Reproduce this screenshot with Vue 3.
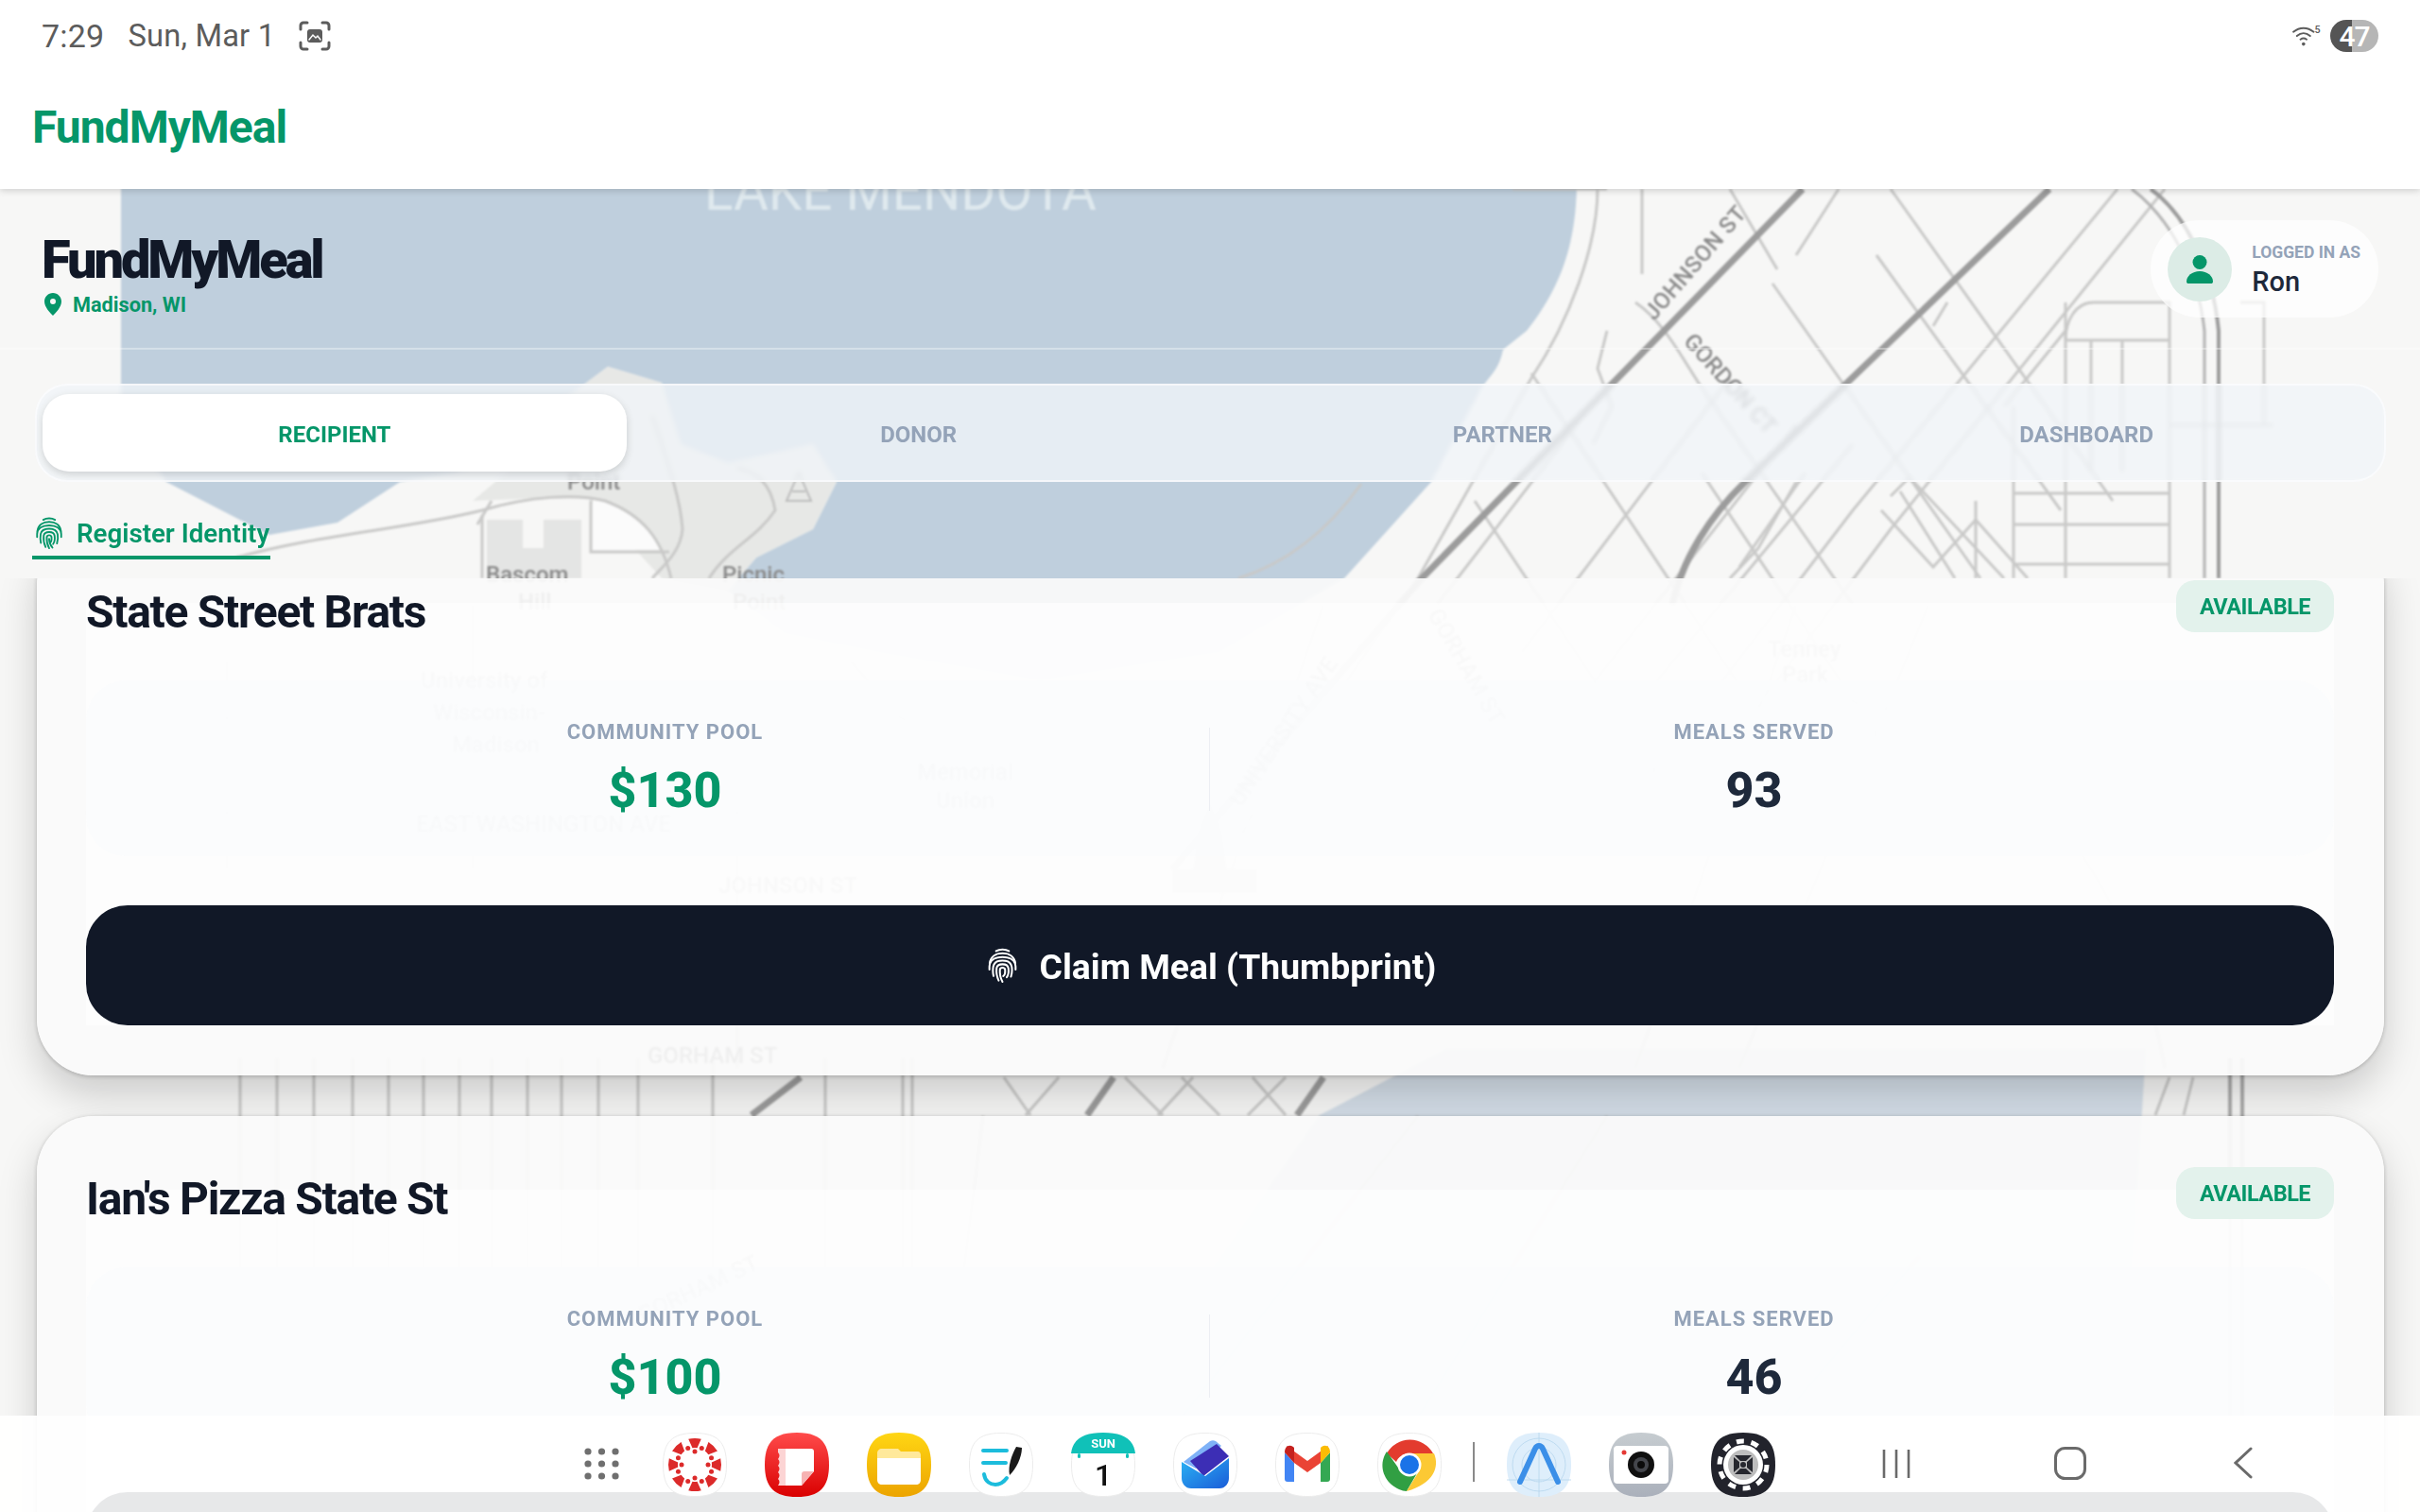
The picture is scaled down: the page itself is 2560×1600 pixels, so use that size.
<script setup>
const polar = (r, a) => {
  const t = (a * Math.PI) / 180
  return [(34 + r * Math.sin(t)).toFixed(2), (34 - r * Math.cos(t)).toFixed(2)]
}
const canvasPetals = [0, 45, 90, 135, 180, 225, 270, 315].map((c) => {
  const [a, b] = polar(28, c - 14)
  const [d, e] = polar(28, c + 14)
  const [f, g] = polar(18, c + 8)
  const [h, i] = polar(18, c - 8)
  return `M${a} ${b}A28 28 0 0 1 ${d} ${e}L${f} ${g}A18 18 0 0 0 ${h} ${i}Z`
})
const canvasDots = [22.5, 67.5, 112.5, 157.5, 202.5, 247.5, 292.5, 337.5, 0, 90, 180, 270].map((a, idx) => {
  const [x, y] = polar(idx < 8 ? 19 : 14, a)
  return { x, y, key: a }
})
const dots = []
for (const y of [4, 17, 30]) for (const x of [4, 18.5, 33]) dots.push({ x, y })

const thin = [
  'M2000 200L2235 530', 'M1985 270L2180 540', 'M1875 300L2095 612', 'M1830 200L1880 285',
  'M1945 200L1900 270', 'M2060 320L2045 345', 'M2290 200L2000 560L1850 760', 'M2240 200L1960 540L1700 880',
  'M1690 200C1690 260 1660 340 1620 400L1500 612L1300 900', 'M1730 320C1760 340 1780 380 1800 410L1960 640',
  'M1700 350L1690 390L1705 430L1685 470', 'M1620 395L1850 740', 'M1560 530L1780 860', 'M1690 420L1520 640',
  'M1830 400L1610 690', 'M1900 450L1680 730', 'M1960 470L1720 760', 'M1910 500L1840 600', 'M1800 500L2000 800',
  'M2145 612L2090 550L2045 600L1990 540', 'M2120 612L2020 505L2000 525', 'M2068 612L2010 520',
  'M2090 530L2090 612', 'M1830 612L1860 580L1900 510', 'M1310 612C1380 590 1420 540 1440 512',
  'M2185 360C2185 340 2195 320 2215 320L2295 320L2295 612', 'M2185 320L2185 612', 'M2212 360L2212 500', 'M2245 360L2245 500',
  'M2185 360L2295 360', 'M2120 430L2185 350', 'M2130 430L2130 612', 'M2130 522L2295 522', 'M2130 555L2295 555', 'M2130 597L2295 597',
  'M2295 450L2405 450', 'M2370 320L2395 320L2395 450', 'M1600 200L1700 200', 'M1737 200L1737 290',
  'M250 590C340 565 430 560 510 540C560 525 610 522 640 530C680 545 700 570 710 612', 'M625 530L625 584L708 584',
  'M510 545L510 612', 'M520 530L505 555', 'M690 440C710 500 720 530 722 560C720 585 700 600 690 612',
  'M750 612C770 580 800 570 820 540C815 510 800 500 780 495', 'M135 1000C300 1020 900 1010 1140 1020',
  'M91 860L1040 860', 'M130 760L1000 760', 'M240 700L240 920', 'M500 640L500 920', 'M780 780L780 1130',
  'M1400 640L1230 1130', 'M900 700L1080 900', 'M1900 640L1730 1130', 'M2040 640L1840 1130', 'M1920 740C2100 740 2250 900 2290 1130',
  'M2030 1330L1800 1600', 'M1700 1181L1500 1500', 'M1500 1181L1250 1500', 'M1040 1181L1000 1500',
  'M1250 1140L1290 1180', 'M1062 1140L1090 1180', 'M1120 1140L1085 1180', 'M1190 1140L1230 1180',
  'M1262 1140L1225 1180', 'M1325 1140L1360 1180', 'M1360 1140L1320 1180', 'M2295 1140L2280 1180', 'M2320 1140L2310 1180',
  'M254 1120V1500', 'M293 1120V1500', 'M332 1120V1500', 'M373 1120V1500', 'M411 1120V1500', 'M448 1120V1500', 'M486 1120V1500',
  'M520 1120V1500', 'M558 1120V1500', 'M594 1120V1500', 'M633 1120V1500', 'M675 1120V1500', 'M754 1120V1500', 'M873 1120V1500', 'M955 1120V1500', 'M965 1120V1500'
]
const major = [
  'M1907 200L1504 612L1240 920', 'M2168 200L1954 405L1846 510C1810 545 1780 590 1769 640',
  'M847 1140L795 1180', 'M1178 1140L1150 1180', 'M1400 1140L1372 1180'
]
</script>

<template>
  <div class="screen">
    <svg class="map" viewBox="0 0 2560 1600" xmlns="http://www.w3.org/2000/svg">
      <rect width="2560" height="1600" fill="#f7f7f6" />
      <path class="lake" d="M128 190H1668C1668 250 1655 300 1615 350L1590 370C1585 395 1572 400 1565 415L1514 510L1422 612L1290 690L1100 720L940 692L830 670L770 625L800 590L860 560L885 510L860 470L770 490L720 470L700 405L643 388L600 420L570 470L480 500L423 510L357 553L285 566L176 510L128 440Z" />
      <path fill="#e7e8e6" d="M560 480L600 420L643 388L700 405L720 470L770 490L860 470L885 510L860 560L800 590L770 625L700 612L620 525L500 530Z" />
      <path fill="#e4e5e4" d="M515 612V550H553V580H575V550H615V612Z" />
      <path fill="#fbfbfb" d="M627 528C660 530 690 560 698 582H627Z" />
      <path fill="#d4dee8" d="M1530 1110H2270L2240 1600H1100L1396 1180Z" />
      <g fill="none" stroke="#c9c9c8" stroke-width="3">
        <path v-for="d in thin" :key="d" :d="d" />
      </g>
      <g fill="none" stroke="#9c9c9c" stroke-width="7">
        <path v-for="d in major" :key="d" :d="d" />
        <path d="M2275 200C2310 225 2340 280 2347 350V612" stroke-width="4" />
        <path d="M2255 200C2295 230 2325 285 2332 350V612" stroke-width="3" stroke="#b4b4b4" />
        <path d="M2359 1120V1600M2372 1120V1600" stroke-width="4" stroke="#aaa" />
      </g>
      <path fill="none" stroke="#bdbdbd" stroke-width="2" d="M832 530L845 500L858 530ZM838 520H852" />
      <g class="labels">
        <text class="lake-label" x="745" y="222" textLength="415" lengthAdjust="spacingAndGlyphs">LAKE MENDOTA</text>
        <text x="1750" y="340" transform="rotate(-49 1750 340)" font-size="27" textLength="150">JOHNSON ST</text>
        <text x="1780" y="362" transform="rotate(48 1780 362)" font-size="24">GORDON CT</text>
        <text x="592" y="482" font-size="24">Picnic</text>
        <text x="600" y="518" font-size="26">Point</text>
        <text x="514" y="616" font-size="26">Bascom</text>
        <text x="764" y="616" font-size="26">Picnic</text>
      </g>
      <g class="labels under">
        <text x="548" y="645" font-size="26">Hill</text>
        <text x="775" y="645" font-size="26">Point</text>
        <text x="445" y="728" font-size="34">University of</text>
        <text x="458" y="762" font-size="34">Wisconsin-</text>
        <text x="478" y="796" font-size="34">Madison</text>
        <text x="970" y="825" font-size="30">Memorial</text>
        <text x="990" y="855" font-size="30">Union</text>
        <text x="440" y="880" font-size="26">EAST WASHINGTON AVE</text>
        <text x="760" y="945" font-size="26">JOHNSON ST</text>
        <text x="685" y="1125" font-size="26">GORHAM ST</text>
        <text x="1313" y="855" transform="rotate(-56 1313 855)" font-size="26">UNIVERSITY AVE</text>
        <text x="1510" y="650" transform="rotate(60 1510 650)" font-size="26">GORHAM ST</text>
        <text x="1870" y="695" font-size="28">Tenney</text>
        <text x="1885" y="722" font-size="28">Park</text>
        <text x="680" y="1400" transform="rotate(-25 680 1400)" font-size="26">GORHAM ST</text>
      </g>
      <path fill="#a8a8a8" d="M1240 945V920H1262L1268 880L1280 850L1292 880L1298 920H1330V945Z" />
    </svg>

    <header class="topbar">
      <div class="status">
        <span class="clock">7:29</span>
        <span class="date">Sun, Mar 1</span>
        <svg class="shot" viewBox="0 0 34 32" fill="none" stroke="#5c5c5c" stroke-width="3" stroke-linecap="round">
          <path d="M2 9V5a3 3 0 0 1 3-3h4M25 2h4a3 3 0 0 1 3 3v4M32 23v4a3 3 0 0 1-3 3h-4M9 30H5a3 3 0 0 1-3-3v-4" />
          <rect x="9" y="9" width="16" height="14" rx="3" fill="#5c5c5c" stroke="none" />
          <path d="M11 20l4-5 3 3 2-2 3 4" stroke="#fff" stroke-width="1.4" />
        </svg>
        <span class="status-fill"></span>
        <svg class="wifi" viewBox="0 0 28 22" fill="none" stroke="#5c5c5c" stroke-width="1.8" stroke-linecap="round">
          <path d="M1 7C7 2 15 2 21 7M4.500 11C8.500 7.500 13.500 7.500 17.500 11M8 14.500C10 13 12 13 14 14.500" />
          <circle cx="11" cy="19" r="1.700" fill="#5c5c5c" stroke="none" />
          <text x="22" y="8" class="wifi-five">5</text>
        </svg>
        <span class="battery"><span class="battery-text">47</span></span>
      </div>
      <div class="brand">FundMyMeal</div>
    </header>

    <section class="page-head">
      <div class="title-block">
        <h1 class="title">FundMyMeal</h1>
        <div class="place">
          <svg class="pin" viewBox="0 0 18 24">
            <path fill="#059669" fill-rule="evenodd" d="M9 0C4 0 0 4 0 9c0 6 6 12 9 15 3-3 9-9 9-15 0-5-4-9-9-9Zm0 6a3 3 0 1 1 0 6 3 3 0 0 1 0-6Z" />
          </svg>
          <span>Madison, WI</span>
        </div>
      </div>
      <div class="user-pill">
        <span class="avatar">
          <svg viewBox="0 0 28 30" class="person">
            <circle cx="14" cy="7.500" r="7.500" fill="#059669" />
            <path fill="#059669" d="M0 28C0 22 6 17 14 17S28 22 28 28C28 29.500 27 30 26 30H2C1 30 0 29.500 0 28Z" />
          </svg>
        </span>
        <span class="user-text">
          <span class="user-label">LOGGED IN AS</span>
          <span class="user-name">Ron</span>
        </span>
      </div>
    </section>

    <nav class="tabs">
      <div class="tab active">RECIPIENT</div>
      <div class="tab">DONOR</div>
      <div class="tab">PARTNER</div>
      <div class="tab">DASHBOARD</div>
    </nav>

    <div class="subnav">
      <div class="subtab">
        <svg class="fp" viewBox="0 0 24 28" fill="none" stroke="#059669" stroke-width="1.500" stroke-linecap="round">
          <path d="M7 2.500C9.800 .8 14.200 .8 17 2.500" />
          <path d="M2 12C2.600 7 6.600 4.200 12 4.200S21.400 7 22 12" />
          <path d="M1.800 17V14.500C2 9.800 6 7.200 12 7.200S22 9.800 22.200 14.500V17" />
          <path d="M5 22C4.400 19.500 4.400 17 4.800 14.500 5.400 11.500 8.400 10 12 10S18.600 11.500 19.200 14.800C19.600 17.500 19.400 20 18.600 22.500" />
          <path d="M9 25.500C7.600 22.500 7 19 7.400 15.800 7.800 13.500 9.600 12.800 12 12.800 14.400 12.800 16.300 13.800 16.600 16 17 19 16.400 21.500 15.300 23" />
          <path d="M12 26.500C10.400 23.500 9.800 19.500 10 17 10.200 15.800 11 15.500 12 15.500S13.800 16 14 17C14.200 19.500 13.600 21.400 12.600 22" />
          <path d="M12 18.500C12 21 12.800 23.500 14.800 26" />
        </svg>
        <span>Register Identity</span>
      </div>
    </div>

    <main class="feed">
      <div class="feed-inner">
        <article class="card">
          <div class="card-head">
            <h2 class="card-title">State Street Brats</h2>
            <span class="badge">AVAILABLE</span>
          </div>
          <div class="stats">
            <div class="stat">
              <div class="stat-label">COMMUNITY POOL</div>
              <div class="stat-value money">$130</div>
            </div>
            <div class="divider"></div>
            <div class="stat">
              <div class="stat-label">MEALS SERVED</div>
              <div class="stat-value">93</div>
            </div>
          </div>
          <button class="claim">
            <svg class="fp-btn" viewBox="0 0 24 28" fill="none" stroke="#fff" stroke-width="1.500" stroke-linecap="round">
              <path d="M7 2.500C9.800 .8 14.200 .8 17 2.500" />
              <path d="M2 12C2.600 7 6.600 4.200 12 4.200S21.400 7 22 12" />
              <path d="M1.800 17V14.500C2 9.800 6 7.200 12 7.200S22 9.800 22.200 14.500V17" />
              <path d="M5 22C4.400 19.500 4.400 17 4.800 14.500 5.400 11.500 8.400 10 12 10S18.600 11.500 19.200 14.800C19.600 17.500 19.400 20 18.600 22.500" />
              <path d="M9 25.500C7.600 22.500 7 19 7.400 15.800 7.800 13.500 9.600 12.800 12 12.800 14.400 12.800 16.300 13.800 16.600 16 17 19 16.400 21.500 15.300 23" />
              <path d="M12 26.500C10.400 23.500 9.800 19.500 10 17 10.200 15.800 11 15.500 12 15.500S13.800 16 14 17C14.200 19.500 13.600 21.400 12.600 22" />
            </svg>
            <span>Claim Meal (Thumbprint)</span>
          </button>
        </article>

        <article class="card">
          <div class="card-head">
            <h2 class="card-title">Ian's Pizza State St</h2>
            <span class="badge">AVAILABLE</span>
          </div>
          <div class="stats">
            <div class="stat">
              <div class="stat-label">COMMUNITY POOL</div>
              <div class="stat-value money">$100</div>
            </div>
            <div class="divider"></div>
            <div class="stat">
              <div class="stat-label">MEALS SERVED</div>
              <div class="stat-value">46</div>
            </div>
          </div>
          <div class="claim"></div>
        </article>
      </div>
    </main>

    <footer class="dock">
      <svg class="apps" viewBox="0 0 37 34" fill="#6f6f6f">
        <circle v-for="(d, i) in dots" :key="i" :cx="d.x" :cy="d.y" r="3.600" />
      </svg>

      <svg class="app" viewBox="0 0 68 68">
        <path class="sq-w" d="M34 .5C58 .5 67.500 10 67.500 34S58 67.500 34 67.500 .5 58 .5 34 10 .5 34 .5Z" />
        <path v-for="p in canvasPetals" :key="p" :d="p" fill="#dc2a2a" />
        <circle v-for="d in canvasDots" :key="d.key" :cx="d.x" :cy="d.y" r="2.500" fill="#dc2a2a" />
      </svg>

      <svg class="app" viewBox="0 0 68 68">
        <defs>
          <linearGradient id="red" x1="0" y1="0" x2="0" y2="1"><stop offset="0" stop-color="#ff4b4b" /><stop offset="1" stop-color="#d90000" /></linearGradient>
          <linearGradient id="yel" x1="0" y1="0" x2="0" y2="1"><stop offset="0" stop-color="#ffd614" /><stop offset="1" stop-color="#eca400" /></linearGradient>
          <linearGradient id="cam" x1="0" y1="0" x2="0" y2="1"><stop offset="0" stop-color="#c6ccd0" /><stop offset="1" stop-color="#aab0bb" /></linearGradient>
          <linearGradient id="blue" x1="0" y1="0" x2="1" y2="1"><stop offset="0" stop-color="#2bb4f4" /><stop offset="1" stop-color="#1a5cd8" /></linearGradient>
        </defs>
        <path fill="url(#red)" d="M34 0C58 0 68 10 68 34S58 68 34 68 0 58 0 34 10 0 34 0Z" />
        <path fill="#fff" d="M16 20c0-2 1-3 3-3h30c2 0 3 1 3 3v21L39 56H19c-2 0-3-1-3-3Z" />
        <path fill="#f6b2b2" d="M39 56V44c0-2 1-3 3-3h10Z" />
        <path fill="#fcd4d4" d="M14 17h8v39h-8c2-3 2-5 0-7 2-3 2-5 0-7 2-3 2-5 0-7 2-3 2-5 0-7 2-3 2-5 0-7Z" />
      </svg>

      <svg class="app" viewBox="0 0 68 68">
        <path fill="url(#yel)" d="M34 0C58 0 68 10 68 34S58 68 34 68 0 58 0 34 10 0 34 0Z" />
        <path fill="#ffe99b" d="M11 22c0-3 2-5 5-5h17l3 3h18c2 0 3 2 3 4v4H11Z" />
        <path fill="#fff" d="M11 27h46v23c0 3-2 5-5 5H16c-3 0-5-2-5-5Z" />
      </svg>

      <svg class="app" viewBox="0 0 68 68">
        <path class="sq-w" d="M34 .5C58 .5 67.500 10 67.500 34S58 67.500 34 67.500 .5 58 .5 34 10 .5 34 .5Z" />
        <path d="M15 19H40M15 32H39" stroke="#1cbcdc" stroke-width="4" stroke-linecap="round" fill="none" />
        <path d="M16 44C17 52 23 55 28 55 33 55 37 52 40 48" stroke="#1cbcdc" stroke-width="4" fill="none" stroke-linecap="round" />
        <path d="M50 15L56 16C56 26 50 38 43 45 41 36 45 24 50 15Z" fill="#1a1a1a" />
      </svg>

      <svg class="app" viewBox="0 0 68 68">
        <path class="sq-w" d="M34 .5C58 .5 67.500 10 67.500 34S58 67.500 34 67.500 .5 58 .5 34 10 .5 34 .5Z" />
        <path fill="#10c1b8" d="M0 22C2 6 14 0 34 0S66 6 68 22Z" />
        <rect x="7" y="22" width="3" height="5" rx="1.500" fill="#10c1b8" />
        <rect x="58" y="22" width="3" height="5" rx="1.500" fill="#10c1b8" />
        <text x="34" y="16" class="cal-day">SUN</text>
        <text x="34" y="56" class="cal-num">1</text>
      </svg>

      <svg class="app" viewBox="0 0 68 68">
        <path class="sq-w" d="M34 .5C58 .5 67.500 10 67.500 34S58 67.500 34 67.500 .5 58 .5 34 10 .5 34 .5Z" />
        <path fill="#7fb2f7" d="M11 31L39 9C41 8 43 8 45 9L51 14L24 38Z" />
        <path fill="#3c2eb5" d="M18 30L46 12L59 25L32 46Z" />
        <path fill="url(#blue)" d="M9 31L34 46L59 27V48C59 54 55 59 49 59H19C13 59 9 54 9 48Z" />
      </svg>

      <svg class="app" viewBox="0 0 68 68">
        <path class="sq-w" d="M34 .5C58 .5 67.500 10 67.500 34S58 67.500 34 67.500 .5 58 .5 34 10 .5 34 .5Z" />
        <path fill="#4285f4" d="M10 21v28c0 2 1 3 3 3h7V32Z" />
        <path fill="#34a853" d="M48 32v20h7c2 0 3-1 3-3V21Z" />
        <path fill="#ea4335" d="M20 32L34 42 48 32 56 14 34 30 12 14Z" />
        <path fill="#c5221f" d="M10 21c0-6 4-9 9-6l1 1V32Z" />
        <path fill="#fbbc04" d="M58 21c0-6-4-9-9-6l-1 1V32Z" />
      </svg>

      <svg class="app" viewBox="0 0 68 68">
        <path class="sq-w" d="M34 .5C58 .5 67.500 10 67.500 34S58 67.500 34 67.500 .5 58 .5 34 10 .5 34 .5Z" />
        <path fill="#e33b2e" d="M10 22A28 28 0 0 1 59 22H34C27 22 22 26 20 31L10 22Z" />
        <path fill="#319f43" d="M10 20C2 32 5 46 15 55 20 59 26 62 31 62L42 43C35 46 26 44 22 37Z" />
        <path fill="#fcc934" d="M34 22H60C66 36 60 54 31 62L44 41C49 34 44 24 34 22Z" />
        <circle cx="34" cy="34" r="12.500" fill="#fff" />
        <circle cx="34" cy="34" r="10" fill="#1a73e8" />
      </svg>

      <span class="dock-sep"></span>

      <svg class="app" viewBox="0 0 68 68">
        <path fill="#deeefb" d="M34 0C58 0 68 10 68 34S58 68 34 68 0 58 0 34 10 0 34 0Z" />
        <g fill="none" stroke="#b5d5ee" stroke-width=".8">
          <circle cx="34" cy="34" r="28" /><circle cx="34" cy="34" r="18" /><path d="M0 50H68M34 0V68" />
        </g>
        <path fill="none" stroke="#3b8fe8" stroke-width="6" stroke-linecap="round" stroke-linejoin="round" d="M14 52L30 17C32 13 36 13 38 17L54 52" />
      </svg>

      <svg class="app" viewBox="0 0 68 68">
        <path fill="url(#cam)" d="M34 0C58 0 68 10 68 34S58 68 34 68 0 58 0 34 10 0 34 0Z" />
        <rect x="5" y="14" width="58" height="40" rx="4" fill="#fff" />
        <circle cx="34" cy="34" r="14" fill="#101010" />
        <circle cx="34" cy="34" r="8" fill="#44464c" />
        <circle cx="34" cy="34" r="4" fill="#0b0b0b" />
        <circle cx="16" cy="21" r="2.500" fill="#e53935" />
      </svg>

      <svg class="app" viewBox="0 0 68 68">
        <path fill="#22232c" d="M34 0C58 0 68 10 68 34S58 68 34 68 0 58 0 34 10 0 34 0Z" />
        <circle cx="34" cy="34" r="21" fill="#fff" />
        <circle cx="34" cy="34" r="25" fill="none" stroke="#fff" stroke-width="5" stroke-dasharray="8 7.700" />
        <circle cx="34" cy="34" r="16" fill="#bdbdbd" />
        <g fill="#26272e">
          <path d="M25 24H43L37 30H31Z" /><path d="M25 44H43L37 38H31Z" /><path d="M24 26V42L30 37V31Z" /><path d="M44 26V42L38 37V31Z" />
          <circle cx="34" cy="34" r="3" />
        </g>
      </svg>

      <svg class="nav-recents" viewBox="0 0 30 32" stroke="#6a6a6a" stroke-width="2.600"><path d="M2 1V31M15 1V31M28 1V31" /></svg>
      <svg class="nav-home" viewBox="0 0 34 35" fill="none" stroke="#6a6a6a" stroke-width="3"><rect x="1.500" y="1.500" width="31" height="32" rx="10" /></svg>
      <svg class="nav-back" viewBox="0 0 20 34" fill="none" stroke="#6a6a6a" stroke-width="3" stroke-linecap="round"><path d="M18 2L2 17L18 32" /></svg>
    </footer>
  </div>
</template>

<style>
html, body { margin: 0; padding: 0; background: #f7f7f6; }
</style>

<style scoped>
.screen {
  position: relative;
  width: 2560px;
  height: 1600px;
  overflow: hidden;
  display: flex;
  flex-direction: column;
  font-family: Roboto, "Liberation Sans", sans-serif;
  color: #111827;
}
.map { position: absolute; inset: 0; width: 2560px; height: 1600px; filter: blur(1px); }
.lake { fill: #bfcfdd; }
.labels text { font-family: Roboto, sans-serif; fill: #8a8a8a; font-size: 24px; font-weight: 500; }
.labels.under text { fill: #444; }
.labels .lake-label { fill: #dfe9ee; font-size: 60px; font-weight: 400; }

.topbar { position: relative; height: 200px; flex: none; background: #fff; box-shadow: 0 2px 7px rgba(0, 0, 0, .16); }
.status { height: 76px; display: flex; align-items: center; padding: 0 44px; color: #5c5c5c; font-size: 34px; }
.clock { letter-spacing: .2px; }
.date { margin-left: 25px; font-size: 32.700px; letter-spacing: .2px; }
.shot { width: 34px; height: 32px; margin-left: 25px; }
.status-fill { flex: 1; }
.wifi { width: 30px; height: 24px; margin-right: 10px; }
.wifi-five { font-family: Roboto, sans-serif; font-size: 10px; font-weight: 500; fill: #5c5c5c; stroke: none; }
.battery {
  width: 51px; height: 34px; border-radius: 17px; display: flex; align-items: center; justify-content: center;
  background: linear-gradient(90deg, #555 0 45%, #b6b6b6 45% 100%);
}
.battery-text { color: #fff; font-size: 30px; font-weight: 500; letter-spacing: -1px; }
.brand { padding-left: 34px; height: 114px; line-height: 117px; font-size: 48px; font-weight: 700; letter-spacing: -1px; color: #059669; }

.page-head {
  position: relative; flex: none; height: 170px; box-sizing: border-box; padding: 33px 44px 0;
  display: flex; justify-content: space-between; align-items: flex-start;
  border-bottom: 2px solid rgba(255, 255, 255, .35);
}
.title { margin: 0; padding-top: 12px; font-size: 56px; line-height: 60px; font-weight: 900; letter-spacing: -3.100px; color: #111827; }
.place { display: flex; align-items: center; height: 30px; margin-top: 2px; color: #059669; font-size: 21.700px; font-weight: 700; }
.pin { width: 18px; height: 24px; margin: 0 12px 0 3px; }
.user-pill {
  display: flex; align-items: center; height: 103px; box-sizing: border-box; padding: 0 19px 0 18px; gap: 21px;
  border-radius: 52px; background: rgba(255, 255, 255, .72);
}
.avatar { width: 68px; height: 68px; border-radius: 50%; background: #dcece6; display: flex; align-items: center; justify-content: center; }
.person { width: 28px; height: 30px; }
.user-text { display: flex; flex-direction: column; padding-top: 2px; }
.user-label { font-size: 17.500px; line-height: 24px; font-weight: 700; color: #94a3b8; }
.user-name { font-size: 29px; line-height: 38px; font-weight: 500; color: #1e293b; }

.tabs {
  position: relative; flex: none; box-sizing: border-box; margin: 36px 36px 0 37px; height: 104px; padding: 9px 6px;
  display: grid; grid-template-columns: repeat(4, 1fr);
  border: 2px solid rgba(255, 255, 255, .6); border-radius: 34px;
  background: rgba(241, 245, 249, .78); backdrop-filter: blur(2px);
}
.tab { display: flex; align-items: center; justify-content: center; box-sizing: border-box; padding-top: 3px; border-radius: 28px; font-size: 24px; font-weight: 700; color: #94a3b8; }
.tab.active { background: #fff; color: #059669; box-shadow: 0 3px 8px rgba(0, 0, 0, .16); }

.subnav { position: relative; flex: none; height: 102px; padding-left: 34px; display: flex; align-items: flex-start; }
.subtab {
  height: 82px; box-sizing: border-box; padding-top: 35px; display: flex; align-items: flex-start; gap: 14px;
  border-bottom: 4px solid #059669; color: #059669; font-size: 27.700px; line-height: 40px; font-weight: 600; padding-right: 1px;
}
.fp { width: 30px; height: 35px; margin: 2px 0 0 3px; }

.feed { position: relative; flex: 1; min-height: 0; overflow: hidden; }
.feed-inner { margin-top: -52px; padding: 0 38px 0 39px; display: flex; flex-direction: column; gap: 43px; }
.card {
  position: relative; flex: none; box-sizing: border-box; height: 578px; padding: 54px 53px 53px 52px; border-radius: 60px;
  background: rgba(250, 250, 250, .94);
  box-shadow: 0 20px 42px rgba(0, 0, 0, .18), 0 1px 5px rgba(0, 0, 0, .22);
}
.card::before {
  content: ""; position: absolute; left: 52px; right: 53px; top: 78px; bottom: 53px;
  background: rgba(255, 255, 255, .6);
}
.card-head { position: relative; display: flex; justify-content: space-between; align-items: flex-start; height: 68px; }
.card-title { margin: 0; font-size: 48px; line-height: 68px; font-weight: 700; letter-spacing: -1.300px; color: #111827; }
.badge {
  width: 167px; height: 55px; display: flex; align-items: center; justify-content: center; border-radius: 20px;
  background: #e3f2ec; color: #059669; font-size: 23.500px; font-weight: 700; letter-spacing: -.5px;
}
.stats {
  position: relative; margin-top: 38px; height: 186px; box-sizing: border-box; padding: 40px 38px 0 37px; border-radius: 42px;
  display: grid; grid-template-columns: 1fr 1px 1fr; background: rgba(248, 250, 252, .4);
}
.stat { text-align: center; }
.stat-label { height: 30px; line-height: 30px; font-size: 22px; font-weight: 700; letter-spacing: 1px; color: #94a3b8; }
.stat-value { margin-top: 15px; height: 64px; line-height: 64px; font-size: 52px; font-weight: 800; color: #1e293b; }
.stat-value.money { color: #059669; }
.divider { height: 88px; margin-top: 10px; background: #eceef3; }
.claim {
  position: relative; box-sizing: border-box; margin-top: 52px; width: 100%; height: 127px; border: 0; border-radius: 44px; background: #111827; color: #fff;
  display: flex; align-items: center; justify-content: center; gap: 23px; padding: 3px 0 0;
  font-family: Roboto, sans-serif; font-size: 37.300px; font-weight: 700;
}
.fp-btn { width: 33px; height: 38px; margin: -3px 0 0 3px; }

.dock {
  position: absolute; left: 0; right: 0; bottom: 0; height: 102px; box-sizing: border-box; padding: 18px 0 0 618px;
  display: flex; align-items: flex-start; gap: 40px; background: rgba(255, 255, 255, .9);
}
.apps { width: 37px; height: 34px; margin: 16px 6px 0 0; }
.app { width: 68px; height: 68px; flex: none; }
.sq-w { fill: #fff; stroke: #ececec; stroke-width: 1; }
.cal-day { font-family: Roboto, sans-serif; font-size: 13px; font-weight: 700; fill: #fff; text-anchor: middle; }
.cal-num { font-family: Roboto, sans-serif; font-size: 32px; font-weight: 500; fill: #111; text-anchor: middle; }
.dock-sep { width: 2px; height: 42px; margin: 10px -6px 0 -7px; background: #8a8a8a; }
.nav-recents { width: 30px; height: 32px; margin: 17px 0 0 73px; }
.nav-home { width: 34px; height: 35px; margin: 15px 0 0 112px; }
.nav-back { width: 20px; height: 34px; margin: 15px 0 0 116px; }
</style>
